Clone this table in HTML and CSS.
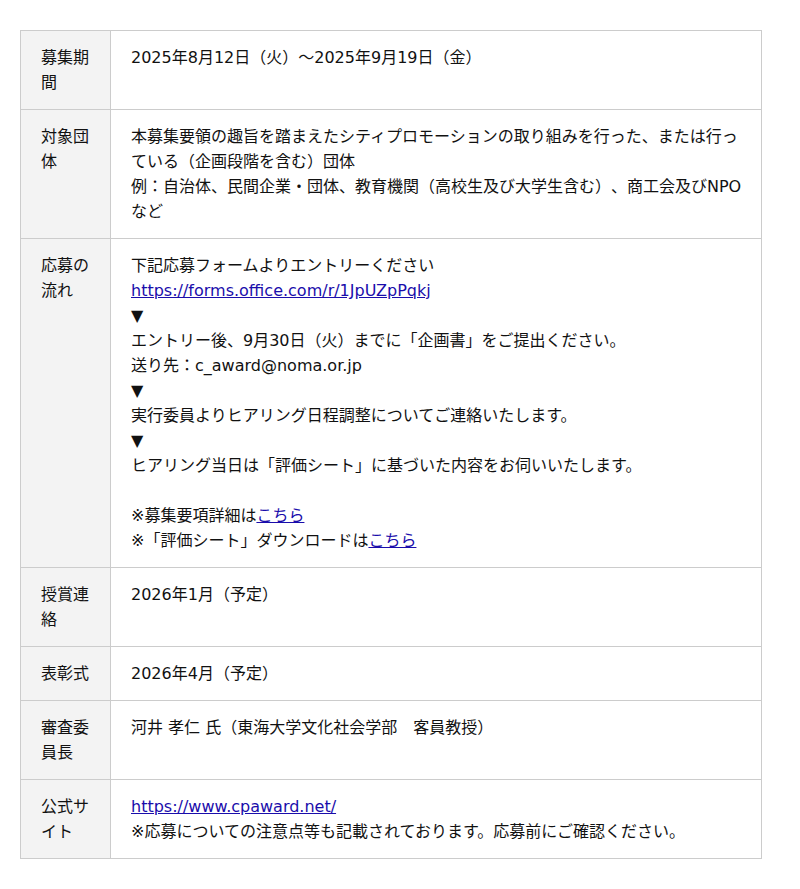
FILE: index.html
```html
<!DOCTYPE html>
<html lang="ja">
<head>
<meta charset="utf-8">
<title>募集要項</title>
<link rel="stylesheet" href="styles.css">
</head>
<body>
<table class="info">
  <tbody>
    <tr>
      <th>募集期間</th>
      <td>2025年8月12日（火）〜2025年9月19日（金）</td>
    </tr>
    <tr>
      <th>対象団体</th>
      <td>本募集要領の趣旨を踏まえたシティプロモーションの取り組みを行った、または行っている（企画段階を含む）団体<br>例：自治体、民間企業・団体、教育機関（高校生及び大学生含む）、商工会及びNPOなど</td>
    </tr>
    <tr>
      <th>応募の流れ</th>
      <td>下記応募フォームよりエントリーください<br><a href="#">https://forms.office.com/r/1JpUZpPqkj</a><br>▼<br>エントリー後、9月30日（火）までに「企画書」をご提出ください。<br>送り先：c_award@noma.or.jp<br>▼<br>実行委員よりヒアリング日程調整についてご連絡いたします。<br>▼<br>ヒアリング当日は「評価シート」に基づいた内容をお伺いいたします。<br><br>※募集要項詳細は<a href="#">こちら</a><br>※「評価シート」ダウンロードは<a href="#">こちら</a></td>
    </tr>
    <tr>
      <th>授賞連絡</th>
      <td>2026年1月（予定）</td>
    </tr>
    <tr>
      <th>表彰式</th>
      <td>2026年4月（予定）</td>
    </tr>
    <tr>
      <th>審査委員長</th>
      <td>河井 孝仁 氏（東海大学文化社会学部　客員教授）</td>
    </tr>
    <tr>
      <th>公式サイト</th>
      <td><a href="#">https://www.cpaward.net/</a><br>※応募についての注意点等も記載されております。応募前にご確認ください。</td>
    </tr>
  </tbody>
</table>
</body>
</html>
```
FILE: styles.css
```css
html, body {
  margin: 0;
  padding: 0;
  background: #ffffff;
}
body {
  padding: 30px 20px;
  font-family: "DejaVu Sans", "Noto Sans CJK JP", sans-serif;
  font-size: 16px;
  line-height: 25px;
  color: #111111;
  text-spacing-trim: space-all;
}
.info {
  width: 742px;
  border-collapse: collapse;
  table-layout: fixed;
}
.info th,
.info td {
  border: 1px solid #cccccc;
  padding: 14px 20px;
  vertical-align: top;
  text-align: left;
  font-weight: normal;
}
.info th {
  width: 49px;
  background: #f3f3f3;
}
.info td {
  padding-right: 14px;
  background: #ffffff;
}
.info a {
  color: #1a0dab;
  text-decoration: underline;
}
```
